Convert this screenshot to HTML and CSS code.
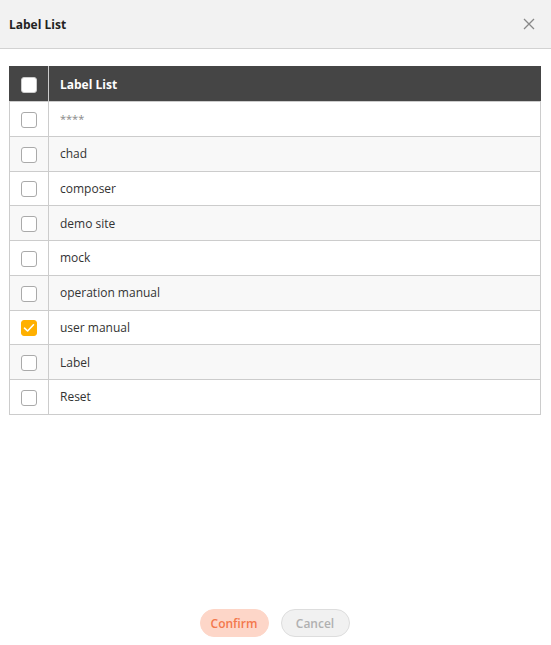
FILE: index.html
```html
<!DOCTYPE html>
<html>
<head>
<meta charset="utf-8">
<link rel="stylesheet" href="styles.css">
</head>
<body>
<div class="dialog">
  <div class="dialog-header">
    <span class="dialog-title">Label List</span>
    <span class="close">
      <svg width="12" height="12" viewBox="0 0 12 12"><path d="M1 1L11 11M11 1L1 11" stroke="#888" stroke-width="1.3" fill="none"/></svg>
    </span>
  </div>
  <div class="dialog-body">
    <table class="list">
      <thead>
        <tr><th class="col-check"><span class="cb cb-head"></span></th><th class="col-name">Label List</th></tr>
      </thead>
      <tbody>
        <tr><td class="col-check"><span class="cb"></span></td><td class="col-name stars">****</td></tr>
        <tr><td class="col-check"><span class="cb"></span></td><td class="col-name">chad</td></tr>
        <tr><td class="col-check"><span class="cb"></span></td><td class="col-name">composer</td></tr>
        <tr><td class="col-check"><span class="cb"></span></td><td class="col-name">demo site</td></tr>
        <tr><td class="col-check"><span class="cb"></span></td><td class="col-name">mock</td></tr>
        <tr><td class="col-check"><span class="cb"></span></td><td class="col-name">operation manual</td></tr>
        <tr><td class="col-check"><span class="cb cb-on"><svg width="12" height="10" viewBox="0 0 12 10"><path d="M1.5 5.2L4.6 8L10.5 1.8" stroke="#fff" stroke-width="1.6" fill="none" stroke-linecap="round" stroke-linejoin="round"/></svg></span></td><td class="col-name">user manual</td></tr>
        <tr><td class="col-check"><span class="cb"></span></td><td class="col-name">Label</td></tr>
        <tr><td class="col-check"><span class="cb"></span></td><td class="col-name">Reset</td></tr>
      </tbody>
    </table>
  </div>
  <div class="dialog-footer">
    <button class="btn btn-confirm">Confirm</button>
    <button class="btn btn-cancel">Cancel</button>
  </div>
</div>
</body>
</html>
```
FILE: styles.css
```css
html, body {
  margin: 0;
  padding: 0;
  background: #fff;
}
body {
  font-family: "Open Sans", "Noto Sans", sans-serif;
  font-size: 12px;
  color: #333;
}
.dialog {
  height: 645px;
  display: flex;
  flex-direction: column;
}
.dialog-header {
  height: 48px;
  background: #f2f2f2;
  border-bottom: 1px solid #d2d2d2;
  display: flex;
  align-items: center;
  justify-content: space-between;
  padding: 0 16px 0 9px;
}
.dialog-title {
  font-weight: 700;
  font-size: 12px;
  color: #222;
}
.close {
  display: flex;
  width: 12px;
  height: 12px;
}
.dialog-body {
  flex: 1;
  padding: 17px 10px 0 9px;
}
.list {
  width: 100%;
  border-collapse: collapse;
  border: 1px solid #ccc;
}
.list th, .list td {
  padding: 0;
  border: 1px solid #ccc;
  text-align: left;
}
.list thead th {
  height: 34px;
  background: #454545;
  color: #fff;
  font-weight: 700;
  border-color: #ccc;
  border-top-color: #454545;
  border-left-color: #454545;
}
.list tbody td {
  height: 33.75px;
}
.list thead th.col-name {
  border-right-color: #454545;
}
.col-check {
  width: 38px;
  text-align: center !important;
  vertical-align: middle;
}
.col-name {
  padding-left: 11px !important;
}
.list tbody tr:nth-child(even) td {
  background: #f8f8f8;
}
.stars {
  color: #888;
  font-size: 11px;
}
.cb {
  display: inline-flex;
  align-items: center;
  justify-content: center;
  width: 14px;
  height: 14px;
  border: 1px solid #aaa;
  border-radius: 3px;
  background: #fff;
  vertical-align: middle;
}
.cb-head {
  border-color: #ccc;
}
.cb-on {
  background: #ffb000;
  border-color: #ffb000;
}
.dialog-footer {
  display: flex;
  justify-content: center;
  gap: 12px;
  padding: 0 2px 8px 0;
}
.btn {
  height: 28px;
  width: 69px;
  padding: 0;
  border-radius: 14px;
  font-family: "Open Sans", "Noto Sans", sans-serif;
  font-size: 12px;
  font-weight: 600;
  border: 1px solid transparent;
}
.btn-confirm {
  background: #fdd6c8;
  color: #f3784c;
  border-color: #fdd6c8;
}
.btn-cancel {
  background: #f1f1f1;
  color: #b0b0b0;
  border-color: #ddd;
}
```
